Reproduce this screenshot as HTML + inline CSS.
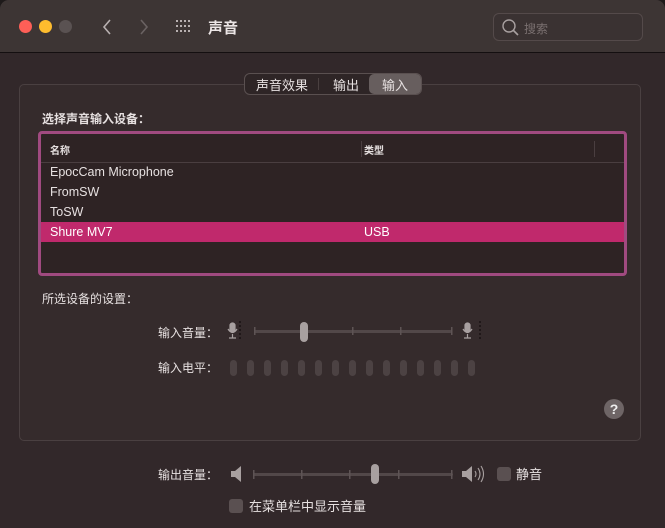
<!DOCTYPE html>
<html><head><meta charset="utf-8"><style>
*{margin:0;padding:0;box-sizing:border-box}
body{width:665px;height:528px;background:#1e1a1a;font-family:"Liberation Sans","Noto Sans CJK SC",sans-serif;color:#e6e0e0;overflow:hidden;position:relative}
.win{position:absolute;left:0;top:0;width:665px;height:528px;background:#32282a;border-radius:9px 9px 0 0;overflow:hidden}
.tb{position:absolute;left:0;top:0;width:665px;height:53px;background:#3d3534;border-bottom:1px solid #140f10}
.dot{position:absolute;top:20px;width:13px;height:13px;border-radius:50%}
.a{position:absolute}
.t{position:absolute;font-size:12px;white-space:nowrap}
.sep{position:absolute;background:#4c4243}
</style></head><body><div class="win">
<div class="tb">
<div class="dot" style="left:19px;background:#fe5f57"></div>
<div class="dot" style="left:39px;background:#febc2e"></div>
<div class="dot" style="left:59px;background:#5a5252"></div>
<svg class="a" style="left:98px;top:16px" width="20" height="22"><path d="M12 4 L6 11 L12 18" stroke="#b8b0b0" stroke-width="1.6" fill="none"/></svg>
<svg class="a" style="left:134px;top:16px" width="20" height="22"><path d="M7 4 L13 11 L7 18" stroke="#6a6262" stroke-width="1.6" fill="none"/></svg>
<svg class="a" style="left:176px;top:20px" width="18" height="14" fill="#b8b0b0">
<g><rect x="0" y="0" width="2" height="2"/><rect x="4" y="0" width="2" height="2"/><rect x="8" y="0" width="2" height="2"/><rect x="12" y="0" width="2" height="2"/>
<rect x="0" y="5" width="2" height="2"/><rect x="4" y="5" width="2" height="2"/><rect x="8" y="5" width="2" height="2"/><rect x="12" y="5" width="2" height="2"/>
<rect x="0" y="10" width="2" height="2"/><rect x="4" y="10" width="2" height="2"/><rect x="8" y="10" width="2" height="2"/><rect x="12" y="10" width="2" height="2"/></g></svg>
<div class="t" style="left:208px;top:17px;font-size:15px;font-weight:bold;color:#ece6e6">声音</div>
<div class="a" style="left:493px;top:13px;width:150px;height:28px;border:1px solid #544a4a;border-radius:6px;background:#3a3232"></div>
<svg class="a" style="left:501px;top:18px" width="20" height="20"><circle cx="8" cy="8" r="6" stroke="#a8a0a0" stroke-width="1.4" fill="none"/><path d="M12.5 12.5 L17 17" stroke="#a8a0a0" stroke-width="1.6"/></svg>
<div class="t" style="left:524px;top:20px;font-size:12px;color:#7a7070">搜索</div>
</div>
<div class="a" style="left:19px;top:84px;width:622px;height:357px;border:1px solid #4a4041;border-radius:5px;background:#352b2c"></div>
<div class="a" style="left:244px;top:73px;width:178px;height:22px;border:1px solid #5a5050;border-radius:6px;background:#2e2526"></div>
<div class="a" style="left:369px;top:74px;width:52px;height:20px;border-radius:5px;background:#675e5e"></div>
<div class="sep" style="left:318px;top:78px;width:1px;height:12px;background:#4a4040"></div>
<div class="t" style="left:256px;top:75px;font-size:13px">声音效果</div>
<div class="t" style="left:333px;top:75px;font-size:13px">输出</div>
<div class="t" style="left:382px;top:75px;font-size:13px">输入</div>
<div class="t" style="left:42px;top:110px;font-weight:bold">选择声音输入设备：</div>
<div class="a" style="left:38px;top:131px;width:589px;height:145px;border:3px solid #a04a80;border-radius:4px;background:#2e2324"></div>
<div class="sep" style="left:41px;top:162px;width:583px;height:1px;background:#4a3e40"></div>
<div class="sep" style="left:361px;top:141px;width:1px;height:16px;background:#4a3e40"></div>
<div class="sep" style="left:594px;top:141px;width:1px;height:16px;background:#4a3e40"></div>
<div class="t" style="left:50px;top:142px;font-size:10px;font-weight:bold">名称</div>
<div class="t" style="left:364px;top:142px;font-size:10px;font-weight:bold">类型</div>
<div class="a" style="left:41px;top:222px;width:583px;height:20px;background:#c0296c"></div>
<div class="t" style="left:50px;top:165px;font-size:12.5px">EpocCam Microphone</div>
<div class="t" style="left:50px;top:185px;font-size:12.5px">FromSW</div>
<div class="t" style="left:50px;top:205px;font-size:12.5px">ToSW</div>
<div class="t" style="left:50px;top:225px;font-size:12.5px;color:#fff">Shure MV7</div>
<div class="t" style="left:364px;top:225px;font-size:12.5px;color:#fff">USB</div>
<div class="t" style="left:42px;top:290px">所选设备的设置：</div>
<div class="t" style="left:158px;top:324px">输入音量：</div>
<div class="t" style="left:158px;top:359px">输入电平：</div>
<svg class="a" style="left:225px;top:320px" width="260" height="26">
<g fill="none" stroke="#a8a0a0" stroke-width="1.2"><rect x="5" y="3" width="5" height="9" rx="2.5" fill="#a8a0a0"/><path d="M3 9 Q7.5 16 12 9 M7.5 14 V18 M4 18 H11"/>
<rect x="240" y="3" width="5" height="9" rx="2.5" fill="#a8a0a0"/><path d="M238 9 Q242.5 16 247 9 M242.5 14 V18 M239 18 H246"/></g>
<g fill="#1a1414"><circle cx="15" cy="2" r="1"/><circle cx="15" cy="6" r="1"/><circle cx="15" cy="10" r="1"/><circle cx="15" cy="14" r="1"/><circle cx="15" cy="18" r="1"/>
<circle cx="255" cy="2" r="1"/><circle cx="255" cy="6" r="1"/><circle cx="255" cy="10" r="1"/><circle cx="255" cy="14" r="1"/><circle cx="255" cy="18" r="1"/></g>
<rect x="29" y="10" width="198" height="3" rx="1.5" fill="#524849"/>
<g fill="#5e5455"><rect x="29" y="7" width="1.5" height="8"/><rect x="127" y="7" width="1.5" height="8"/><rect x="175" y="7" width="1.5" height="8"/><rect x="226" y="7" width="1.5" height="8"/></g>
<rect x="75" y="2" width="8" height="20" rx="4" fill="#a8a0a0"/>
</svg>
<svg class="a" style="left:229px;top:360px" width="250" height="17" fill="#4c4243">
<rect x="1" y="0" width="7" height="16" rx="3.5"/><rect x="18" y="0" width="7" height="16" rx="3.5"/><rect x="35" y="0" width="7" height="16" rx="3.5"/><rect x="52" y="0" width="7" height="16" rx="3.5"/><rect x="69" y="0" width="7" height="16" rx="3.5"/><rect x="86" y="0" width="7" height="16" rx="3.5"/><rect x="103" y="0" width="7" height="16" rx="3.5"/><rect x="120" y="0" width="7" height="16" rx="3.5"/><rect x="137" y="0" width="7" height="16" rx="3.5"/><rect x="154" y="0" width="7" height="16" rx="3.5"/><rect x="171" y="0" width="7" height="16" rx="3.5"/><rect x="188" y="0" width="7" height="16" rx="3.5"/><rect x="205" y="0" width="7" height="16" rx="3.5"/><rect x="222" y="0" width="7" height="16" rx="3.5"/><rect x="239" y="0" width="7" height="16" rx="3.5"/>
</svg>
<div class="a" style="left:604px;top:399px;width:20px;height:20px;border-radius:50%;background:#6e6566;color:#eee;font-size:14px;font-weight:bold;text-align:center;line-height:20px">?</div>
<div class="t" style="left:158px;top:466px">输出音量：</div>
<svg class="a" style="left:228px;top:462px" width="260" height="26">
<path d="M3 9 H7 L13 4 V20 L7 15 H3 Z" fill="#a8a0a0"/>
<rect x="25" y="11" width="200" height="3" rx="1.5" fill="#524849"/>
<g fill="#5e5455"><rect x="25" y="8" width="1.5" height="9"/><rect x="73" y="8" width="1.5" height="9"/><rect x="121" y="8" width="1.5" height="9"/><rect x="170" y="8" width="1.5" height="9"/><rect x="223" y="8" width="1.5" height="9"/></g>
<rect x="143" y="2" width="8" height="20" rx="4" fill="#a8a0a0"/>
<path d="M234 9 H238 L244 4 V20 L238 15 H234 Z" fill="#a8a0a0"/>
<path d="M247 9 Q249 12 247 15 M250 6 Q254 12 250 18 M253 4 Q258 12 253 20" stroke="#a8a0a0" stroke-width="1.1" fill="none"/>
</svg>
<div class="a" style="left:497px;top:467px;width:14px;height:14px;border-radius:3px;background:#5a5051"></div>
<div class="t" style="left:516px;top:464px;font-size:13px">静音</div>
<div class="a" style="left:229px;top:499px;width:14px;height:14px;border-radius:3px;background:#5a5051"></div>
<div class="t" style="left:249px;top:496px;font-size:13px">在菜单栏中显示音量</div>
</div></body></html>
